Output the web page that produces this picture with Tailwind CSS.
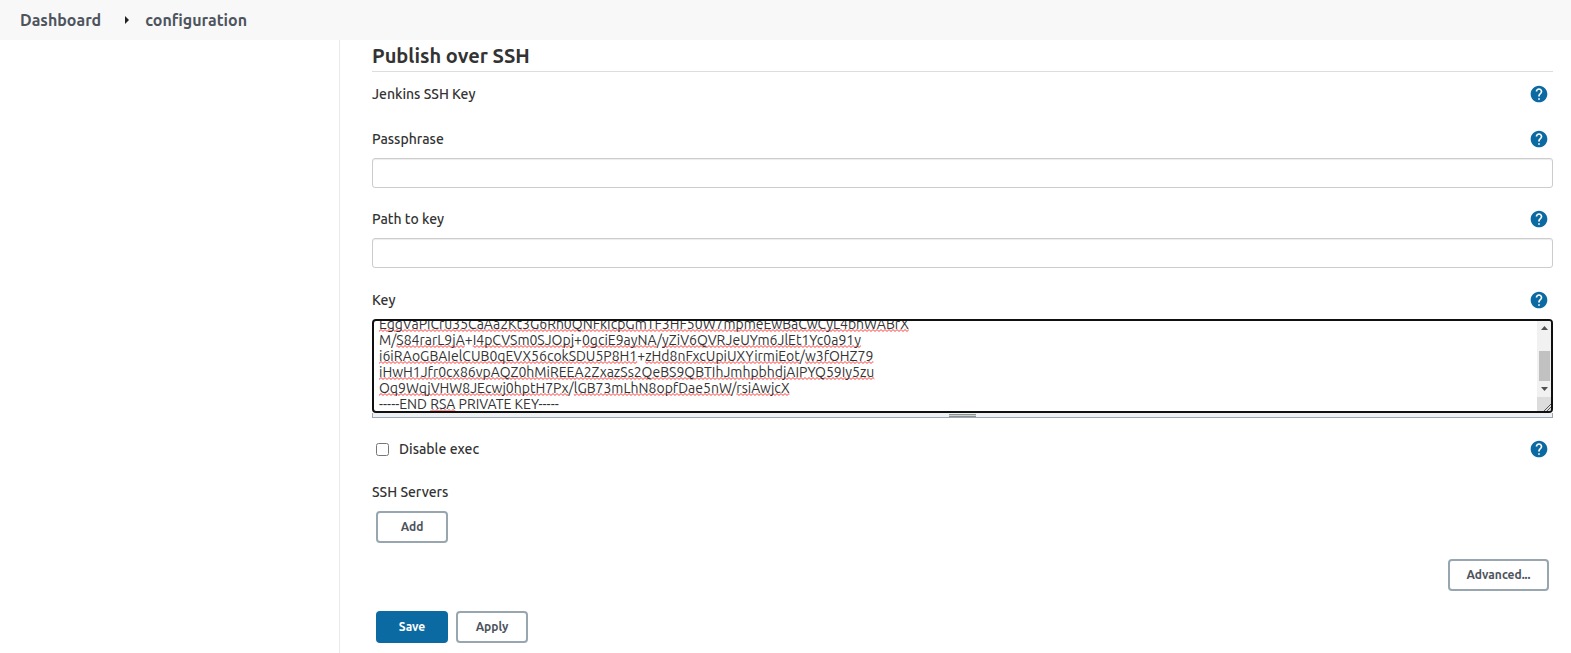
<!DOCTYPE html>
<html lang="en">
<head>
<meta charset="utf-8">
<meta name="viewport" content="width=device-width, initial-scale=1">
<title>configuration [Jenkins]</title>
<script src="https://cdn.jsdelivr.net/npm/@tailwindcss/browser@4"></script>
</head>
<body class="flex min-h-screen flex-col bg-white font-['Ubuntu','Noto_Sans',sans-serif] text-sm text-[#333]">
<svg class="hidden" aria-hidden="true">
  <symbol id="help" viewBox="0 0 24 24"><path fill="#0b6aa2" d="M12 2C6.48 2 2 6.48 2 12s4.48 10 10 10 10-4.48 10-10S17.52 2 12 2zm1 17h-2v-2h2v2zm2.07-7.75l-.9.92C13.45 12.9 13 13.5 13 15h-2v-.5c0-1.1.45-2.1 1.17-2.83l1.24-1.26c.37-.36.59-.86.59-1.41 0-1.1-.9-2-2-2s-2 .9-2 2H8c0-2.21 1.79-4 4-4s4 1.79 4 4c0 .88-.36 1.68-.93 2.25z"/></symbol>
</svg>
<header class="h-10 bg-[#f8f8f8]">
  <nav aria-label="Breadcrumb" class="flex h-10 items-center px-5 text-base font-bold text-[#4d545d]">
    <a href="#">Dashboard</a>
    <svg class="mr-4 ml-6 h-2 w-1" viewBox="0 0 4 8" aria-hidden="true"><path d="M0 0l4 4-4 4z" fill="#222"/></svg>
    <a href="#">configuration</a>
  </nav>
</header>
<div class="flex grow">
  <aside class="w-[340px] shrink-0 border-r border-[#eaeaea]"></aside>
  <main class="min-w-0 grow pr-[18px] pl-8">
    <form onsubmit="return false">
      <h1 class="h-8 border-b border-[#ddd] text-xl leading-8 font-bold">Publish over SSH</h1>
      <div class="mt-3 flex h-5 items-center justify-between pr-1 font-medium">
        <h2>Jenkins SSH Key</h2>
        <button type="button" aria-label="Help for Jenkins SSH Key"><svg class="size-5"><use href="#help"/></svg></button>
      </div>
      <div class="mt-[25px] flex h-5 items-center justify-between pr-1 font-medium">
        <label for="pass">Passphrase</label>
        <button type="button" aria-label="Help for Passphrase"><svg class="size-5"><use href="#help"/></svg></button>
      </div>
      <input id="pass" type="password" class="mt-[9px] block h-[30px] w-full rounded-[3px] border border-[#ccc] px-1.5 shadow-[inset_0_1px_1px_rgba(0,0,0,0.075)]">
      <div class="mt-[21px] flex h-5 items-center justify-between pr-1 font-medium">
        <label for="path">Path to key</label>
        <button type="button" aria-label="Help for Path to key"><svg class="size-5"><use href="#help"/></svg></button>
      </div>
      <input id="path" type="text" class="mt-[9px] block h-[30px] w-full rounded-[3px] border border-[#ccc] px-1.5 shadow-[inset_0_1px_1px_rgba(0,0,0,0.075)]">
      <div class="mt-[22px] flex h-5 items-center justify-between pr-1 font-medium">
        <label for="key">Key</label>
        <button type="button" aria-label="Help for Key"><svg class="size-5"><use href="#help"/></svg></button>
      </div>
      <div class="relative mt-[9px]">
        <!-- spelling marks under the words of the key -->
        <svg class="pointer-events-none absolute top-0 left-0 h-[94px] w-[600px]" aria-hidden="true">
          <defs><pattern id="wave" width="4" height="16" patternUnits="userSpaceOnUse"><path d="M-1 12.500L1 10.500l2 2 2-2" fill="none" stroke="#f33" stroke-width="1"/></pattern></defs>
          <g id="marks" fill="url(#wave)"></g>
        </svg>
        <textarea id="key" spellcheck="false" class="relative block h-[94px] w-full resize-none overflow-hidden rounded-[4px] border-2 border-[#101010] bg-transparent px-[5px] pb-4 text-sm leading-4 whitespace-pre outline-none">EggVaPiCru35CaAa2Kt3G6Rh0QNFkIcpGmTF3HF50W7mpmeEwBaCwCyL4bhWABrX
M/S84rarL9jA+I4pCVSm0SJOpj+0gciE9ayNA/yZiV6QVRJeUYm6JlEt1Yc0a91y
i6iRAoGBAIelCUB0qEVX56cokSDU5P8H1+zHd8nFxcUpiUXYirmiEot/w3fOHZ79
iHwH1Jfr0cx86vpAQZ0hMiREEA2ZxazSs2QeBS9QBTIhJmhpbhdjAIPYQ59Iy5zu
Oq9WqjVHW8JEcwj0hptH7Px/lGB73mLhN8opfDae5nW/rsiAwjcX
-----END RSA PRIVATE KEY-----</textarea>
        <!-- scrollbar and resize corner -->
        <svg class="pointer-events-none absolute top-0.5 right-0.5 h-[90px] w-[14px]" viewBox="0 0 14 90" aria-hidden="true">
          <path d="M0 0h12q2 0 2 2v74H0z" fill="#f1f1f1"/><path d="M0 76h14v12q0 2-2 2H0z" fill="#dcdcdc"/>
          <path d="M2 30h11v30H2z" fill="#c1c1c1"/><path d="M4 9h7L7.500 5zM4 66h7l-3.500 4z" fill="#505050"/>
          <path d="M7 90l7-7M10 90l4-4" stroke="#555" fill="none"/>
        </svg>
      </div>
      <div class="flex h-[5px] items-center justify-center border-x border-b border-[#9aa7b0] bg-[#eef1f3]"><span class="h-[3px] w-[27px] border-y border-[#8a9290] bg-[#ccd0ce]"></span></div>
      <div class="mt-[21px] flex h-5 items-center justify-between pr-1 pl-1 font-medium">
        <span class="flex items-center gap-[10px]"><input id="exec" type="checkbox" class="size-[13px]"><label for="exec">Disable exec</label></span>
        <button type="button" aria-label="Help for Disable exec"><svg class="size-5"><use href="#help"/></svg></button>
      </div>
      <h2 class="mt-[23px] h-5 leading-5 font-medium">SSH Servers</h2>
      <div class="mt-[9px] ml-1 flex"><button type="button" class="h-8 min-w-[72px] rounded-[4px] border-2 border-[#98a6af] px-4 text-xs font-bold text-[#4d545d]">Add</button></div>
      <div class="mt-4 mr-1 flex justify-end"><button type="button" class="h-8 min-w-[101px] rounded-[4px] border-2 border-[#98a6af] px-4 text-xs font-bold text-[#4d545d]">Advanced...</button></div>
      <div class="mt-5 ml-1 flex gap-2">
        <button type="submit" class="h-8 min-w-[72px] rounded-[4px] bg-[#0b6aa2] px-4 text-xs font-bold text-white">Save</button>
        <button type="button" class="h-8 min-w-[72px] rounded-[4px] border-2 border-[#98a6af] px-4 text-xs font-bold text-[#4d545d]">Apply</button>
      </div>
    </form>
  </main>
</div>
<script>
  const key = document.getElementById('key');
  const marks = document.getElementById('marks');
  // Mark every word of the key, line by line, at its measured place
  function markWords() {
    key.scrollTop = 5;
    marks.replaceChildren();
    const probe = document.createElement('span');
    const cs = getComputedStyle(key);
    probe.style.cssText = 'position:absolute;visibility:hidden;white-space:pre';
    probe.style.font = cs.font;
    document.body.append(probe);
    const widthOf = (text) => {
      probe.textContent = text;
      return probe.getBoundingClientRect().width;
    };
    key.value.split('\n').forEach((line, i) => {
      for (const m of line.matchAll(/[A-Za-z0-9]+/g)) {
        if (/^(M|END|PRIVATE|KEY)$/.test(m[0])) continue;
        const start = widthOf(line.slice(0, m.index));
        const r = document.createElementNS('http://www.w3.org/2000/svg', 'rect');
        r.setAttribute('x', 7 + start);
        r.setAttribute('width', widthOf(line.slice(0, m.index + m[0].length)) - start);
        r.setAttribute('y', 10 + i * 16);
        r.setAttribute('height', i === 5 ? 2 : 3);
        marks.append(r);
      }
    });
    probe.remove();
  }
  new ResizeObserver(markWords).observe(key);
  addEventListener('load', markWords);
</script>
</body>
</html>
